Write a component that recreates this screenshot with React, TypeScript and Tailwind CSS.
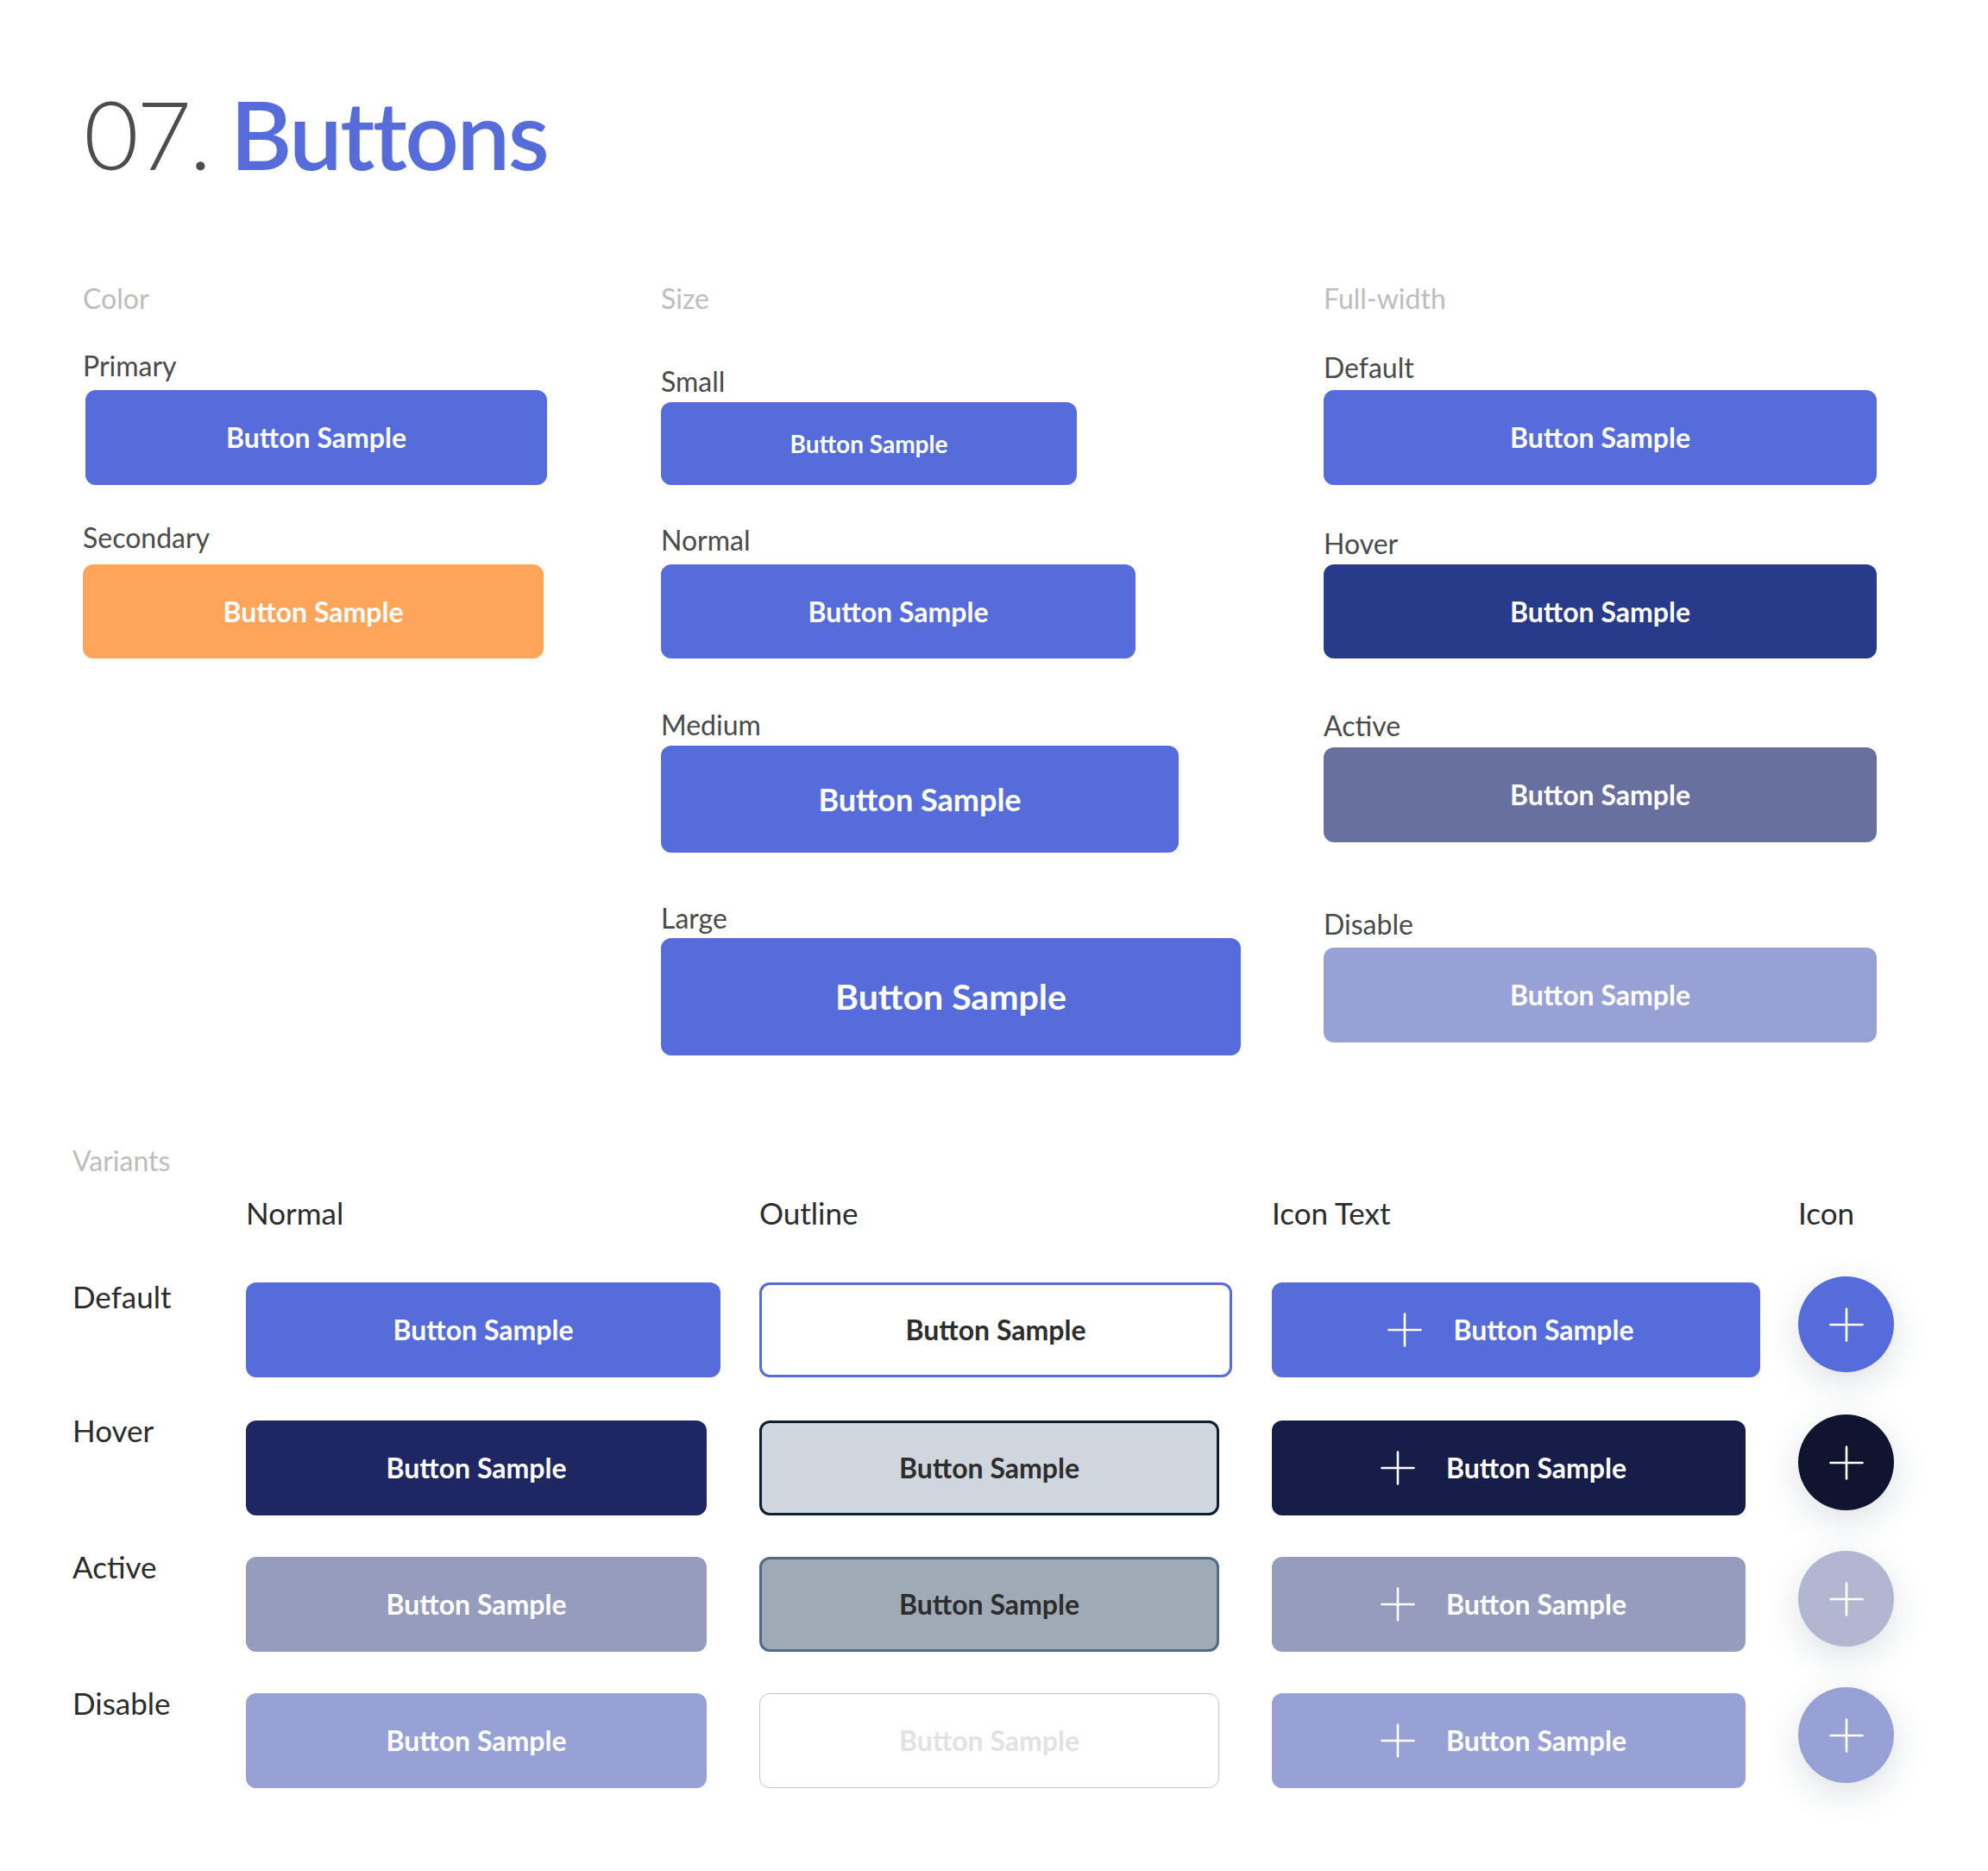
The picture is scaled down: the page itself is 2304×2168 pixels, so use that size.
import React from "react";

const itemLabel = "text-[32px] leading-[32px] text-[#4a4a4a]";
const groupLabel = "text-[32px] leading-[32px] text-[#bdbdbd]";
const rowLabel = "text-[35px] leading-[35px] text-[#2b2b2b]";

function Plus() {
  return (
    <svg width="40" height="40" viewBox="0 0 40 40" fill="none" aria-hidden>
      <path d="M20 1.5v37M1.5 20h37" stroke="white" strokeWidth="2.6" strokeLinecap="round" />
    </svg>
  );
}

function Btn({ className, children }: { className: string; children?: React.ReactNode }) {
  return (
    <button
      type="button"
      className={"flex items-center justify-center rounded-[12px] font-bold " + className}
    >
      {children ?? "Button Sample"}
    </button>
  );
}

function IconText({ className }: { className: string }) {
  return (
    <Btn className={"h-[110px] pr-[12px] text-[32px] text-white gap-[36px] " + className}>
      <Plus />
      <span>Button Sample</span>
    </Btn>
  );
}

function Circle({ className }: { className: string }) {
  return (
    <div
      className={
        "-mt-[7px] flex h-[111px] w-[111px] items-center justify-center rounded-full shadow-[0_12px_40px_rgba(40,60,90,0.16)] " +
        className
      }
    >
      <Plus />
    </div>
  );
}

export default function App() {
  return (
    <div className="min-h-[2168px] w-[2304px] bg-white font-['Lato',sans-serif]">
      {/* heading */}
      <h1 className="pl-[97px] pt-[98px] text-[110px] leading-[112px] tracking-[-2.5px]">
        <span className="font-light text-[#4d4d4d]">07.</span>
        <span className="ml-[24px] font-semibold text-[#566cda]">Buttons</span>
      </h1>

      {/* top three columns */}
      <div className="mt-[120px] flex pl-[96px]">
        {/* color */}
        <div className="flex w-[670px] flex-col">
          <div className={groupLabel}>Color</div>
          <div className={"mt-[46px] " + itemLabel}>Primary</div>
          <Btn className="ml-[3px] mt-[12px] h-[110px] w-[535px] bg-[#566cda] text-[32px] text-white" />
          <div className={"mt-[45px] " + itemLabel}>Secondary</div>
          <Btn className="mt-[15px] h-[109px] w-[534px] bg-[#ffa55b] text-[32px] text-white" />
        </div>

        {/* size */}
        <div className="flex w-[768px] flex-col">
          <div className={groupLabel}>Size</div>
          <div className={"mt-[64px] " + itemLabel}>Small</div>
          <Btn className="mt-[8px] h-[96px] w-[482px] bg-[#566cda] text-[28px] text-white" />
          <div className={"mt-[48px] " + itemLabel}>Normal</div>
          <Btn className="mt-[12px] h-[109px] w-[550px] bg-[#566cda] text-[32px] text-white" />
          <div className={"mt-[61px] " + itemLabel}>Medium</div>
          <Btn className="mt-[8px] h-[124px] w-[600px] bg-[#566cda] text-[36px] text-white" />
          <div className={"mt-[60px] " + itemLabel}>Large</div>
          <Btn className="mt-[7px] h-[136px] w-[672px] bg-[#566cda] text-[41px] text-white" />
        </div>

        {/* full width */}
        <div className="flex w-[641px] flex-col">
          <div className={groupLabel}>Full-width</div>
          <div className={"mt-[48px] " + itemLabel}>Default</div>
          <Btn className="mt-[10px] h-[110px] w-full bg-[#566cda] text-[32px] text-white" />
          <div className={"mt-[52px] " + itemLabel}>Hover</div>
          <Btn className="mt-[8px] h-[109px] w-full bg-[#283a8a] text-[32px] text-white" />
          <div className={"mt-[62px] " + itemLabel}>Active</div>
          <Btn className="mt-[9px] h-[110px] w-full bg-[#68709f] text-[32px] text-white" />
          <div className={"mt-[79px] " + itemLabel}>Disable</div>
          <Btn className="mt-[11px] h-[110px] w-full bg-[#97a1d6] text-[32px] text-white" />
        </div>
      </div>

      {/* variants */}
      <div className="mt-[106px] pl-[84px]">
        <div className={groupLabel}>Variants</div>

        <div className="mt-[27px] flex">
          <div className="w-[201px]" />
          <div className={"w-[595px] " + rowLabel}>Normal</div>
          <div className={"w-[594px] " + rowLabel}>Outline</div>
          <div className={"w-[610px] " + rowLabel}>Icon Text</div>
          <div className={rowLabel}>Icon</div>
        </div>

        {/* default */}
        <div className="mt-[63px] flex items-start">
          <div className={"w-[201px] -mt-[1px] " + rowLabel}>Default</div>
          <div className="w-[595px]">
            <Btn className="h-[110px] w-[550px] bg-[#566cda] text-[32px] text-white" />
          </div>
          <div className="w-[594px]">
            <Btn className="h-[110px] w-[548px] border-[3px] border-[#566cda] bg-white text-[32px] text-[#2d2d2d]" />
          </div>
          <div className="w-[610px]">
            <IconText className="w-[566px] bg-[#566cda]" />
          </div>
          <Circle className="bg-[#566cda]" />
        </div>

        {/* hover */}
        <div className="mt-[50px] flex items-start">
          <div className={"w-[201px] -mt-[6px] " + rowLabel}>Hover</div>
          <div className="w-[595px]">
            <Btn className="h-[110px] w-[534px] bg-[#1e2762] text-[32px] text-white" />
          </div>
          <div className="w-[594px]">
            <Btn className="h-[110px] w-[533px] border-[3px] border-[#0c1f33] bg-[#cfd6dd] text-[32px] text-[#2d2d2d]" />
          </div>
          <div className="w-[610px]">
            <IconText className="w-[549px] bg-[#161d48]" />
          </div>
          <Circle className="bg-[#10142f]" />
        </div>

        {/* active */}
        <div className="mt-[48px] flex items-start">
          <div className={"w-[201px] -mt-[6px] " + rowLabel}>Active</div>
          <div className="w-[595px]">
            <Btn className="h-[110px] w-[534px] bg-[#959cbd] text-[32px] text-white" />
          </div>
          <div className="w-[594px]">
            <Btn className="h-[110px] w-[533px] border-[3px] border-[#536a84] bg-[#9eabb6] text-[32px] text-[#2d2d2d]" />
          </div>
          <div className="w-[610px]">
            <IconText className="w-[549px] bg-[#959cbd]" />
          </div>
          <Circle className="bg-[#b2b7d1]" />
        </div>

        {/* disable */}
        <div className="mt-[48px] flex items-start">
          <div className={"w-[201px] -mt-[6px] " + rowLabel}>Disable</div>
          <div className="w-[595px]">
            <Btn className="h-[110px] w-[534px] bg-[#97a1d6] text-[32px] text-white" />
          </div>
          <div className="w-[594px]">
            <Btn className="h-[110px] w-[533px] border-[1.5px] border-[#c4c4c4] bg-white text-[32px] text-[#e2e2e2]" />
          </div>
          <div className="w-[610px]">
            <IconText className="w-[549px] bg-[#97a1d6]" />
          </div>
          <Circle className="bg-[#97a1d6]" />
        </div>
      </div>
    </div>
  );
}
